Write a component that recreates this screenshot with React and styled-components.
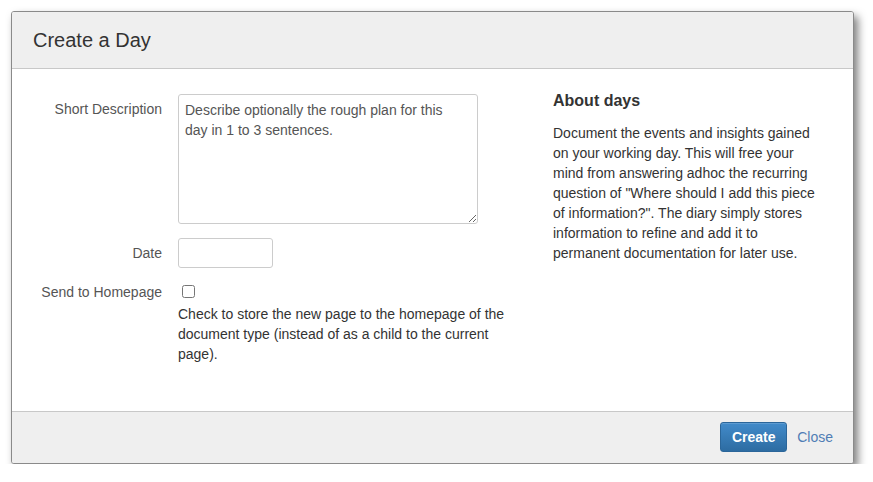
import React from 'react';
import styled, { createGlobalStyle } from 'styled-components';

const GlobalStyle = createGlobalStyle`
  html, body {
    margin: 0;
    padding: 0;
    background: #fff;
    font-family: "Liberation Sans", Arial, sans-serif;
    font-size: 14px;
    color: #333;
  }
`;

const Page = styled.div`
  padding: 11px 0 0 11px;
`;

const Modal = styled.div`
  width: 841px;
  border: 1px solid #8a8a8a;
  border-radius: 3px;
  background: #fff;
  box-shadow: 4px 5px 8px rgba(0, 0, 0, 0.5);
  overflow: hidden;
`;

const Header = styled.div`
  height: 56px;
  display: flex;
  align-items: center;
  padding: 0 21px;
  background: #efefef;
  border-bottom: 1px solid #c8c8c8;
`;

const Title = styled.h3`
  margin: 0;
  font-size: 20px;
  font-weight: normal;
  color: #333;
`;

const Body = styled.div`
  display: flex;
  padding: 22px 0 0 0;
  height: 320px;
`;

const Form = styled.div`
  display: grid;
  grid-template-columns: 150px 345px;
  column-gap: 16px;
  row-gap: 14px;
  align-content: start;
  width: 541px;
  padding-top: 3px;
`;

const Label = styled.label`
  text-align: right;
  color: #555;
  line-height: 20px;
  padding-top: ${p => p.$top ?? 5}px;
`;

const TextArea = styled.textarea`
  box-sizing: border-box;
  width: 300px;
  height: 130px;
  padding: 5px 14px 5px 6px;
  border: 1px solid #ccc;
  border-radius: 3px;
  font-family: inherit;
  font-size: 14px;
  line-height: 20px;
  color: #555;
  resize: vertical;
  &::placeholder {
    color: #555;
  }
`;

const Input = styled.input`
  box-sizing: border-box;
  width: 95px;
  height: 30px;
  border: 1px solid #ccc;
  border-radius: 3px;
  margin: 0;
`;

const CheckField = styled.div`
  display: flex;
  flex-direction: column;
`;

const Check = styled.input`
  width: 13px;
  height: 13px;
  margin: 3px 0 0 4px;
`;

const Help = styled.p`
  margin: 6px 0 0;
  line-height: 20px;
  color: #333;
`;

const Aside = styled.div`
  width: 272px;
`;

const AsideTitle = styled.h4`
  margin: 0;
  font-size: 16px;
  font-weight: bold;
  line-height: 20px;
  color: #333;
`;

const AsideText = styled.p`
  margin: 12px 0 0;
  line-height: 20px;
`;

const Footer = styled.div`
  height: 52px;
  display: flex;
  align-items: center;
  justify-content: flex-end;
  gap: 10px;
  padding: 0 20px 2px 0;
  box-sizing: border-box;
  background: #efefef;
  border-top: 1px solid #c8c8c8;
`;

const Button = styled.button`
  height: 30px;
  width: 67px;
  border: 1px solid #2b669a;
  border-radius: 3px;
  background: linear-gradient(#428bca, #2d6ca2);
  color: #fff;
  font-family: inherit;
  font-size: 14px;
  font-weight: bold;
  padding: 0;
  box-shadow: inset 0 1px 0 rgba(255, 255, 255, 0.15);
`;

const LinkButton = styled.a`
  color: #4f7db5;
  font-size: 14px;
  text-decoration: none;
`;

export default function App() {
  return (
    <Page>
      <GlobalStyle />
      <Modal>
        <Header>
          <Title>Create a Day</Title>
        </Header>
        <Body>
          <Form>
            <Label>Short Description</Label>
            <TextArea placeholder="Describe optionally the rough plan for this day in 1 to 3 sentences." />
            <Label>Date</Label>
            <Input type="text" />
            <Label $top={0}>Send to Homepage</Label>
            <CheckField>
              <Check type="checkbox" />
              <Help>
                Check to store the new page to the homepage of the document type (instead of as a child to the current page).
              </Help>
            </CheckField>
          </Form>
          <Aside>
            <AsideTitle>About days</AsideTitle>
            <AsideText>
              Document the events and insights gained on your working day. This will free your mind from answering adhoc the recurring question of "Where should I add this piece of information?". The diary simply stores information to refine and add it to permanent documentation for later use.
            </AsideText>
          </Aside>
        </Body>
        <Footer>
          <Button>Create</Button>
          <LinkButton href="#">Close</LinkButton>
        </Footer>
      </Modal>
    </Page>
  );
}
